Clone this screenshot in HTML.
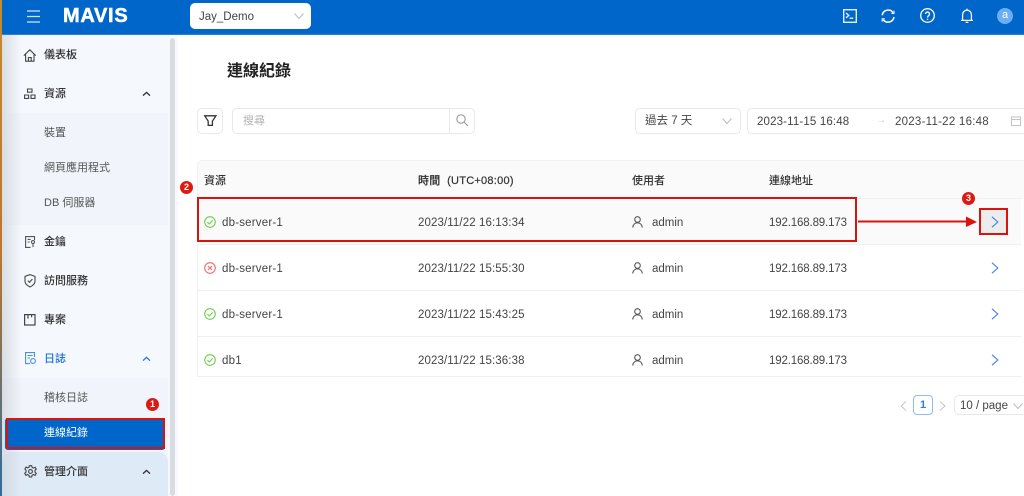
<!DOCTYPE html>
<html lang="zh-Hant"><head><meta charset="utf-8"><title>連線紀錄</title>
<style>
*{box-sizing:border-box}
html,body{margin:0;padding:0}
body{width:1024px;height:496px;overflow:hidden;position:relative;background:#fff;font-family:"Liberation Sans","Noto Sans CJK TC",sans-serif;font-size:12px;color:#333}
.a{position:absolute}
.t{position:absolute;white-space:nowrap;line-height:16px}
svg{position:absolute;overflow:visible}
.nav{font-size:11px;font-weight:500;color:#333}
.sub{color:#555;font-size:11px}
.hd{font-size:11px;font-weight:500;color:#333}
.c{font-size:11.5px;color:#444}
.line{position:absolute;left:197px;width:824px;height:1px;background:#f0f0f0}
.box{position:absolute;background:#fff;border:1px solid #e8e8e8;border-radius:5px}
.red{position:absolute;border:2px solid #d8140f}
.badge{position:absolute;width:13px;height:13px;border-radius:50%;background:#dd1a12;color:#fff;font-size:9px;font-weight:700;line-height:13px;text-align:center}
</style></head><body>

<!-- header -->
<div class="a" style="left:0;top:0;width:1024px;height:35px;background:#0166c9"></div>
<div class="a" style="left:0;top:34px;width:1024px;height:1px;background:#2e7fd2"></div>
<svg style="left:27px;top:10px" width="14" height="13" fill="none" stroke="#cfe2f6" stroke-width="1.2"><path d="M0 1h13M0 6.5h13M0 12h13"/></svg>
<div class="t" style="left:63px;top:5px;font-size:20px;line-height:23px;font-weight:700;color:#fff;letter-spacing:.7px;-webkit-text-stroke:.5px #fff">MAVIS</div>
<div class="a" style="left:190px;top:3px;width:121px;height:26px;background:#fff;border-radius:5px"></div>
<div class="t" style="left:199px;top:9px;font-size:11.5px;color:#444">Jay_Demo</div>
<svg style="left:294px;top:13px" width="10" height="6" fill="none" stroke="#bbb" stroke-width="1"><path d="M.5.5 5 5.5 9.500.5"/></svg>
<svg style="left:843px;top:9px" width="15" height="15" fill="none" stroke="#e6f0fa" stroke-width="1.4"><rect x=".7" y=".7" width="12.600" height="12.600"/><path d="M3 4l2.800 2.400L3 8.800M6.600 9.200h3.600"/></svg>
<svg style="left:881px;top:9px" width="15" height="15" fill="none" stroke="#f0f6fc" stroke-width="1.600"><path d="M1.200 6.200A6 6 0 0 1 12 3.600M13 8a6 6 0 0 1-10.800 2.600"/><path d="M13 1.600v2.800h-2.600M1.200 12.600V9.800h2.600" stroke-width="1.100"/></svg>
<svg style="left:920px;top:8px" width="15" height="15" fill="none" stroke="#f0f6fc" stroke-width="1.400"><circle cx="7.500" cy="7.500" r="6.800"/><path d="M5.500 6a2 2 0 1 1 3.200 1.600C7.900 8.200 7.500 8.600 7.500 9.600"/><path d="M7.500 10.800v1.100"/></svg>
<svg style="left:960px;top:8px" width="14" height="16" fill="none" stroke="#f0f6fc" stroke-width="1.300"><path d="M1 12.400h12M2.600 12.400V6.600a4.400 4.400 0 0 1 8.800 0v5.800M5.600 14.300h2.800M7 .6v1.500"/></svg>
<div class="a" style="left:997px;top:8px;width:16px;height:16px;border-radius:50%;background:#6aaef5;color:#fff;font-size:11px;line-height:15px;text-align:center">a</div>

<!-- sidebar -->
<div class="a" style="left:0;top:35px;width:170px;height:461px;background:#f5f9fe"></div>
<div class="a" style="left:0;top:113px;width:168px;height:112px;background:#f1f5fb"></div>
<div class="a" style="left:0;top:378px;width:168px;height:82px;background:#f1f5fb"></div>
<div class="a" style="left:2px;top:452px;width:166px;height:44px;background:#dfeaf7;border-radius:10px 10px 0 0"></div>
<div class="a" style="left:0;top:35px;width:22px;height:461px;background:linear-gradient(90deg,rgba(205,210,216,.75),rgba(205,210,216,0))"></div>
<div class="a" style="left:0;top:0;width:1.500px;height:496px;background:linear-gradient(180deg,#c88a2a,#c0762b 50%,#2e6d9e)"></div>
<div class="a" style="left:170px;top:38px;width:5px;height:458px;background:#d9dce0;border-radius:3px"></div>
<div class="a" style="left:175px;top:35px;width:3px;height:461px;background:#f6f9fd"></div>
<div class="a" style="left:5px;top:418px;width:160px;height:32px;background:#0166c9;border-radius:3px"></div>

<svg style="left:23px;top:49px" width="14" height="13" fill="none" stroke="#444" stroke-width="1.100"><path d="M.8 6.600 6.800.8l6 5.800M2.600 5.400v6.800h8.400V5.400M5.400 12.200V8.600h2.800v3.600"/></svg>
<div class="t nav" style="left:44px;top:47px">儀表板</div>
<svg style="left:24px;top:88px" width="12" height="12" fill="none" stroke="#444" stroke-width="1.100"><path d="M3.500 1h4.500v3.200H3.500zM.6 7h4v3.400h-4zM7 7h4v3.400H7z"/></svg>
<div class="t nav" style="left:44px;top:86px">資源</div>
<svg style="left:142px;top:91px" width="9" height="6" fill="none" stroke="#333" stroke-width="1.300"><path d="M1 4.600 4.500 1.400 8 4.600"/></svg>
<div class="t sub" style="left:44px;top:125px">裝置</div>
<div class="t sub" style="left:44px;top:160px">網頁應用程式</div>
<div class="t sub" style="left:44px;top:195px">DB 伺服器</div>
<svg style="left:25px;top:236px" width="11" height="12" fill="none" stroke="#555" stroke-width="1.100"><path d="M9.500 4V.6H.6v10.800h5M2.600 3.400h3M2.600 6h2"/><circle cx="8" cy="6" r="1.500"/><path d="M8 7.500v3.600"/></svg>
<div class="t nav" style="left:44px;top:234px">金鑰</div>
<svg style="left:24px;top:274px" width="12" height="14" fill="none" stroke="#444" stroke-width="1.100"><path d="M6 .6 11 2.400v5c0 2.600-2.200 4.200-5 5.600-2.800-1.400-5-3-5-5.600v-5z"/><path d="M3.800 6.600 5.500 8.300 8.400 5"/></svg>
<div class="t nav" style="left:44px;top:273px">訪問服務</div>
<svg style="left:24px;top:314px" width="12" height="12" fill="none" stroke="#444" stroke-width="1.200"><rect x=".6" y=".6" width="10.400" height="10.400"/><path d="M4 .6v4M7.600.6v2.600"/></svg>
<div class="t nav" style="left:44px;top:312px">專案</div>
<svg style="left:25px;top:352px" width="12" height="13" fill="none" stroke="#4a8fe0" stroke-width="1.100"><path d="M9.500 5V.6H.6v11h4.400M2.600 3.500h5M2.600 6h2.500"/><circle cx="8" cy="9" r="2.400"/></svg>
<div class="t nav" style="left:44px;top:351px;color:#1d72d8">日誌</div>
<svg style="left:142px;top:356px" width="9" height="6" fill="none" stroke="#2a7ad8" stroke-width="1.300"><path d="M1 4.600 4.500 1.400 8 4.600"/></svg>
<div class="t sub" style="left:44px;top:390px">稽核日誌</div>
<div class="t" style="left:44px;top:425px;color:#fff;font-size:11px">連線紀錄</div>
<div class="red" style="left:6px;top:418px;width:159px;height:31px"></div>
<div class="badge" style="left:146px;top:398px">1</div>
<svg style="left:24px;top:465px" width="13" height="13" fill="none" stroke="#444" stroke-width="1.100"><circle cx="6.500" cy="6.500" r="1.900"/><path d="M5.300.7h2.400l.4 1.700 1.500.7 1.500-.9 1.200 2-1.300 1.200v1.800l1.300 1.200-1.200 2-1.500-.9-1.500.7-.4 1.700H5.300l-.4-1.700-1.500-.7-1.500.9-1.200-2 1.300-1.200V5.200L.9 4l1.200-2 1.500.9 1.500-.7z"/></svg>
<div class="t nav" style="left:44px;top:464px">管理介面</div>
<svg style="left:142px;top:469px" width="9" height="6" fill="none" stroke="#333" stroke-width="1.300"><path d="M1 4.600 4.500 1.400 8 4.600"/></svg>

<!-- title and toolbar -->
<div class="t" style="left:227px;top:61px;font-size:16px;line-height:22px;font-weight:700;color:#222">連線紀錄</div>
<div class="box" style="left:197px;top:108px;width:26px;height:26px"></div>
<svg style="left:204px;top:115px" width="13" height="12" fill="none" stroke="#333" stroke-width="1.300"><path d="M.7.8h11.200L8.400 6.200v4.200H4.200V6.200z"/></svg>
<div class="box" style="left:232px;top:108px;width:243px;height:26px"></div>
<div class="a" style="left:449px;top:109px;width:1px;height:24px;background:#e8e8e8"></div>
<div class="t" style="left:243px;top:113px;color:#b5b5b5;font-size:11px">搜尋</div>
<svg style="left:456px;top:114px" width="13" height="13" fill="none" stroke="#999" stroke-width="1.100"><circle cx="5" cy="5" r="4.200"/><path d="M8 8l4 4"/></svg>
<div class="box" style="left:635px;top:108px;width:106px;height:26px"></div>
<div class="t" style="left:645px;top:113px;font-size:11.500px;color:#444">過去 7 天</div>
<svg style="left:722px;top:118px" width="10" height="6" fill="none" stroke="#bbb" stroke-width="1"><path d="M.5.5 5 5.500 9.500.5"/></svg>
<div class="box" style="left:747px;top:108px;width:285px;height:26px"></div>
<div class="t" style="left:757px;top:114px;font-size:11.500px;color:#444;letter-spacing:.15px">2023-11-15 16:48</div>
<div class="t" style="left:876px;top:113px;font-size:10px;color:#ccc">→</div>
<div class="t" style="left:895px;top:114px;font-size:11.500px;color:#444;letter-spacing:.25px">2023-11-22 16:48</div>
<svg style="left:1011px;top:116px" width="10" height="10" fill="none" stroke="#c4c4c4" stroke-width="1"><rect x=".5" y="1" width="9" height="8.500"/><path d="M.5 3.500h9"/></svg>

<!-- table -->
<div class="a" style="left:197px;top:160px;width:827px;height:39px;background:#fafafa;border-radius:5px 0 0 0;border-top:1px solid #f0f0f0;border-left:1px solid #f0f0f0"></div>
<div class="a" style="left:197px;top:199px;width:824px;height:46px;background:#fafafa"></div>
<div class="a" style="left:197px;top:199px;width:1px;height:177px;background:#f0f0f0"></div>
<div class="line" style="top:198px"></div>
<div class="line" style="top:244px"></div>
<div class="line" style="top:290px"></div>
<div class="line" style="top:336px"></div>
<div class="line" style="top:376px"></div>

<div class="t hd" style="left:204px;top:173px">資源</div>
<div class="t hd" style="left:418px;top:173px;letter-spacing:.25px;-webkit-text-stroke:.2px #333">時間&nbsp; (UTC+08:00)</div>
<div class="t hd" style="left:632px;top:173px">使用者</div>
<div class="t hd" style="left:769px;top:173px">連線地址</div>

<svg style="left:204px;top:216px" width="12" height="12" fill="none" stroke="#6fcf4f" stroke-width="1.100"><circle cx="6" cy="6" r="5.300"/><path d="M3.400 6.200 5.300 8 8.600 4.400"/></svg>
<div class="t c" style="left:222px;top:215px;letter-spacing:.2px">db-server-1</div>
<div class="t c" style="left:418px;top:215px;letter-spacing:.1px">2023/11/22 16:13:34</div>
<svg style="left:632px;top:216px" width="11" height="12" fill="none" stroke="#555" stroke-width="1.100"><circle cx="5.500" cy="3.500" r="2.800"/><path d="M.7 11.500c.4-3 2.300-4.700 4.800-4.700s4.400 1.700 4.800 4.700"/></svg>
<div class="t c" style="left:652px;top:215px">admin</div>
<div class="t c" style="left:769px;top:215px;letter-spacing:-.15px">192.168.89.173</div>

<svg style="left:204px;top:262px" width="12" height="12" fill="none" stroke="#ef6b6b" stroke-width="1.100"><circle cx="6" cy="6" r="5.300"/><path d="M4 4l4 4M8 4l-4 4"/></svg>
<div class="t c" style="left:222px;top:261px;letter-spacing:.2px">db-server-1</div>
<div class="t c" style="left:418px;top:261px;letter-spacing:.1px">2023/11/22 15:55:30</div>
<svg style="left:632px;top:262px" width="11" height="12" fill="none" stroke="#555" stroke-width="1.100"><circle cx="5.500" cy="3.500" r="2.800"/><path d="M.7 11.500c.4-3 2.300-4.700 4.800-4.700s4.400 1.700 4.800 4.700"/></svg>
<div class="t c" style="left:652px;top:261px">admin</div>
<div class="t c" style="left:769px;top:261px;letter-spacing:-.15px">192.168.89.173</div>

<svg style="left:204px;top:308px" width="12" height="12" fill="none" stroke="#6fcf4f" stroke-width="1.100"><circle cx="6" cy="6" r="5.300"/><path d="M3.400 6.200 5.300 8 8.600 4.400"/></svg>
<div class="t c" style="left:222px;top:307px;letter-spacing:.2px">db-server-1</div>
<div class="t c" style="left:418px;top:307px;letter-spacing:.1px">2023/11/22 15:43:25</div>
<svg style="left:632px;top:308px" width="11" height="12" fill="none" stroke="#555" stroke-width="1.100"><circle cx="5.500" cy="3.500" r="2.800"/><path d="M.7 11.500c.4-3 2.300-4.700 4.800-4.700s4.400 1.700 4.800 4.700"/></svg>
<div class="t c" style="left:652px;top:307px">admin</div>
<div class="t c" style="left:769px;top:307px;letter-spacing:-.15px">192.168.89.173</div>

<svg style="left:204px;top:354px" width="12" height="12" fill="none" stroke="#6fcf4f" stroke-width="1.100"><circle cx="6" cy="6" r="5.300"/><path d="M3.400 6.200 5.300 8 8.600 4.400"/></svg>
<div class="t c" style="left:222px;top:353px;letter-spacing:.2px">db1</div>
<div class="t c" style="left:418px;top:353px;letter-spacing:.1px">2023/11/22 15:36:38</div>
<svg style="left:632px;top:354px" width="11" height="12" fill="none" stroke="#555" stroke-width="1.100"><circle cx="5.500" cy="3.500" r="2.800"/><path d="M.7 11.500c.4-3 2.300-4.700 4.800-4.700s4.400 1.700 4.800 4.700"/></svg>
<div class="t c" style="left:652px;top:353px">admin</div>
<div class="t c" style="left:769px;top:353px;letter-spacing:-.15px">192.168.89.173</div>

<!-- chevrons -->
<div class="a" style="left:980px;top:209px;width:27px;height:25px;background:#ececec"></div>
<svg style="left:991px;top:216px" width="8" height="12" fill="none" stroke="#3f80ea" stroke-width="1.100"><path d="M1 .8 6.800 6 1 11.200"/></svg>
<svg style="left:991px;top:262px" width="8" height="12" fill="none" stroke="#3f80ea" stroke-width="1.100"><path d="M1 .8 6.800 6 1 11.200"/></svg>
<svg style="left:991px;top:308px" width="8" height="12" fill="none" stroke="#3f80ea" stroke-width="1.100"><path d="M1 .8 6.800 6 1 11.200"/></svg>
<svg style="left:991px;top:354px" width="8" height="12" fill="none" stroke="#3f80ea" stroke-width="1.100"><path d="M1 .8 6.800 6 1 11.200"/></svg>

<!-- annotations -->
<div class="red" style="left:197px;top:197px;width:660px;height:45px"></div>
<div class="red" style="left:979px;top:208px;width:29px;height:27px"></div>
<svg style="left:858px;top:216px" width="119" height="12"><path d="M0 5.500h110" stroke="#d8140f" stroke-width="2"/><path d="M108 .5 119 6 108 11z" fill="#d8140f"/></svg>
<div class="badge" style="left:180px;top:181px">2</div>
<div class="badge" style="left:962px;top:192px">3</div>

<!-- pagination -->
<svg style="left:900px;top:401px" width="7" height="10" fill="none" stroke="#c4c4c4" stroke-width="1"><path d="M6 .6 1 5l5 4.400"/></svg>
<div class="a" style="left:913px;top:395px;width:20px;height:20px;border:1px solid #8dbdf3;border-radius:4px;color:#2f7de0;font-weight:700;font-size:11px;line-height:18px;text-align:center">1</div>
<svg style="left:939px;top:401px" width="7" height="10" fill="none" stroke="#c4c4c4" stroke-width="1"><path d="M1 .6 6 5l-5 4.400"/></svg>
<div class="box" style="left:954px;top:395px;width:80px;height:20px"></div>
<div class="t" style="left:960px;top:398px;font-size:11.500px;color:#444">10 / page</div>
<svg style="left:1013px;top:403px" width="10" height="6" fill="none" stroke="#bbb" stroke-width="1"><path d="M.5.5 5 5.500 9.500.5"/></svg>
</body></html>
